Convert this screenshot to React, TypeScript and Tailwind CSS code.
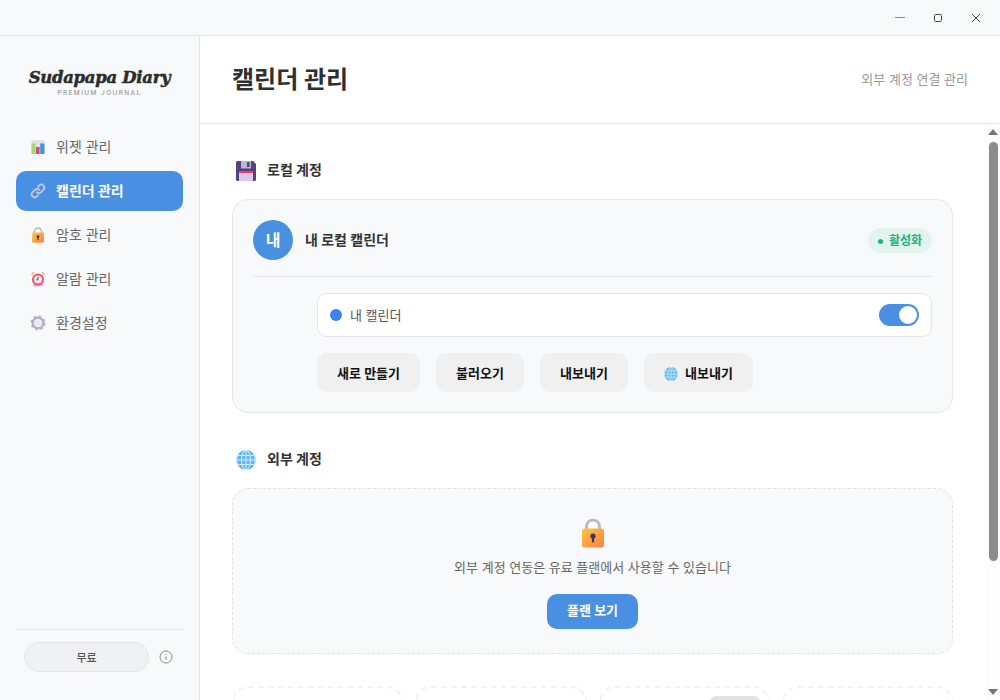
import React from 'react';

const FONT = 'font-["Inter","Noto_Sans_CJK_KR",sans-serif]';

const ChartIcon = ({ className = 'w-4 h-4' }: { className?: string }) => (
  <svg viewBox="0 0 16 16" className={className}>
    <rect x="1.500" y="1" width="13" height="14" fill="#e4e0ea" />
    <rect x="1.500" y="4.500" width="4" height="10.500" fill="#a5d86a" />
    <rect x="6" y="8" width="3.600" height="7" fill="#e8407a" />
    <rect x="10.200" y="4.500" width="4.300" height="10.500" fill="#3b97e3" />
  </svg>
);

const LinkIcon = () => (
  <svg viewBox="0 0 16 16" className="w-4 h-4" fill="none" stroke="#c9c6d8" strokeWidth="1.9" strokeLinecap="round">
    <path d="M6.8 9.2a3 3 0 0 0 4.3 0l2.3-2.3a3 3 0 0 0-4.3-4.3L8 3.8" />
    <path d="M9.2 6.8a3 3 0 0 0-4.3 0L2.6 9.1a3 3 0 0 0 4.3 4.3L8 12.2" />
  </svg>
);

const LockIcon = ({ className = 'w-4 h-4' }: { className?: string }) => (
  <svg viewBox="0 0 24 30" className={className}>
    <defs>
      <linearGradient id="lockBody" x1="0" y1="0" x2="1" y2="1">
        <stop offset="0" stopColor="#fcc73f" />
        <stop offset="1" stopColor="#fb7f4a" />
      </linearGradient>
    </defs>
    <path d="M5.5 13V8.5a6.5 6.5 0 0 1 13 0V13" fill="none" stroke="#b9b3c6" strokeWidth="2.6" />
    <rect x="1" y="10.5" width="22" height="19" rx="2.5" fill="url(#lockBody)" />
    <circle cx="12" cy="18" r="2.6" fill="#3d3560" />
    <rect x="10.9" y="18" width="2.2" height="6.5" rx="1" fill="#3d3560" />
  </svg>
);

const AlarmIcon = () => (
  <svg viewBox="0 0 16 16" className="w-4 h-4">
    <path d="M1.5 4.5a2.4 2.4 0 0 1 3.4-3zM14.5 4.5a2.4 2.4 0 0 0-3.4-3z" fill="#f5b335" />
    <rect x="3" y="12.5" width="10" height="3" rx="1" fill="#cbb8e2" />
    <circle cx="8" cy="8.5" r="6" fill="#ee4f73" />
    <circle cx="8" cy="8.5" r="4.1" fill="#f7e6e8" />
    <path d="M8 6v2.8h-1.6" stroke="#7a3550" strokeWidth="1" fill="none" />
  </svg>
);

const GearIcon = () => (
  <svg viewBox="0 0 16 16" className="w-4 h-4">
    <circle cx="8" cy="8" r="5.200" fill="none" stroke="#b7adc9" strokeWidth="2.400" />
    <circle cx="8" cy="8" r="6.500" fill="none" stroke="#b7adc9" strokeWidth="2" strokeDasharray="2.550 2.550" />
    <circle cx="8" cy="8" r="3.200" fill="#ece8f0" />
  </svg>
);

const SaveIcon = () => (
  <svg viewBox="0 0 20 20" className="w-5 h-5">
    <path d="M1.5 0h15.5L20 3v15.5a1.5 1.5 0 0 1-1.5 1.5h-17A1.5 1.5 0 0 1 0 18.500v-17A1.500 1.500 0 0 1 1.500 0z" fill="#55417f" />
    <rect x="5" y="0" width="10" height="7.500" fill="#bdb5cc" />
    <rect x="11" y="1" width="2.500" height="5" fill="#55417f" />
    <rect x="3" y="10" width="14" height="10" fill="#dcc8e6" />
    <rect x="3" y="10" width="14" height="2" fill="#ec3f63" />
  </svg>
);

const GlobeIcon = ({ className = 'w-5 h-5' }: { className?: string }) => (
  <svg viewBox="0 0 20 20" className={className}>
    <circle cx="10" cy="10" r="10" fill="#5cb6f4" />
    <g fill="none" stroke="#d3ecfb" strokeWidth="1.100">
      <ellipse cx="10" cy="10" rx="4.500" ry="9.700" />
      <path d="M10 0v20M1 5.500h18M0 10h20M1 14.500h18" />
      <path d="M3 2.500 a14 14 0 0 0 0 15M17 2.500a14 14 0 0 1 0 15" />
    </g>
  </svg>
);

const navItems = [
  { label: '위젯 관리', icon: <ChartIcon /> },
  { label: '캘린더 관리', icon: <LinkIcon />, active: true },
  { label: '암호 관리', icon: <LockIcon /> },
  { label: '알람 관리', icon: <AlarmIcon /> },
  { label: '환경설정', icon: <GearIcon /> },
];

const TitleBar = () => (
  <div className="h-9 shrink-0 flex items-center justify-end bg-[#f8f9fb] border-b border-[#e4e5e8] pr-px">
    <div className="w-[46px] flex justify-center">
      <div className="w-[10px] h-px bg-[#8a8a8a]" />
    </div>
    <div className="w-[30px] flex justify-center">
      <div className="w-2 h-2 border border-[#444] rounded-[1.5px]" />
    </div>
    <div className="w-[46px] flex justify-center">
      <svg viewBox="0 0 10 10" className="w-[10px] h-[10px]" stroke="#444" strokeWidth="1">
        <path d="M1 1l8 8M9 1l-8 8" />
      </svg>
    </div>
  </div>
);

const Sidebar = () => (
  <aside className="w-[200px] shrink-0 flex flex-col bg-[#f8f9fb] border-r border-[#e4e5e8] px-4">
    <div className="h-[96px] pt-[31px] flex flex-col items-center">
      <div className='font-["DejaVu_Serif",serif] italic font-bold text-[16.500px] leading-[22px] tracking-[-0.300px] text-[#2c2c2c] whitespace-nowrap [-webkit-text-stroke:0.500px_#2c2c2c]'>
        Sudapapa Diary
      </div>
      <div className="text-[6.500px] leading-[8px] tracking-[1.400px] text-[#888] whitespace-nowrap">PREMIUM JOURNAL</div>
    </div>
    <nav className="flex flex-col gap-1 mt-[-5px]">
      {navItems.map((item) => (
        <div
          key={item.label}
          className={`h-10 flex items-center gap-[10px] pl-[14px] rounded-[10px] text-sm ${
            item.active ? 'bg-[#4a90e2] text-white font-bold' : 'text-[#666]'
          }`}
        >
          <span className="w-4 h-4 flex items-center justify-center">{item.icon}</span>
          <span>{item.label}</span>
        </div>
      ))}
    </nav>
    <div className="mt-auto h-[71px] border-t border-[#e4e5e8] flex items-start pt-3 pl-2">
      <div className="w-[125px] h-[30px] pt-[2px] rounded-full bg-[#f0f1f3] border border-[#e4e5e8] flex items-center justify-center text-[11px] font-medium text-[#555]">
        무료
      </div>
      <svg viewBox="0 0 14 14" className="w-[14px] h-[14px] ml-[10px] mt-2" fill="none" stroke="#888" strokeWidth="1">
        <circle cx="7" cy="7" r="6" />
        <path d="M7 6.300v3.500M7 4v1" />
      </svg>
    </div>
  </aside>
);

const SectionTitle = ({ icon, title }: { icon: React.ReactNode; title: string }) => (
  <div className="flex items-center gap-[11px] pl-[3px] h-[22px]">
    <span className="w-[21px] flex justify-center">{icon}</span>
    <h2 className="pb-[2px] text-sm font-bold text-[#333]">{title}</h2>
  </div>
);

const ActionButton = ({ width, children }: { width: string; children: React.ReactNode }) => (
  <button className={`${width} h-[39px] pt-[2px] rounded-[10px] bg-[#f0f0f0] text-[13px] font-semibold text-[#111] flex items-center justify-center gap-[7px]`}>
    {children}
  </button>
);

const Scrollbar = () => (
  <div className="w-[14px] shrink-0 bg-[#fdfdfd] flex flex-col items-center">
    <svg viewBox="0 0 10 6" className="w-[10px] h-[6px] mt-[5px] mb-[7px]" fill="#777">
      <path d="M5 0l5 6H0z" />
    </svg>
    <div className="w-[9px] h-[419px] rounded-full bg-[#8c8c8c]" />
    <svg viewBox="0 0 10 6" className="w-[10px] h-[6px] mt-auto mb-[5px]" fill="#777">
      <path d="M5 6L0 0h10z" />
    </svg>
  </div>
);

export default function App() {
  return (
    <div className={`w-[1000px] h-[700px] flex flex-col overflow-hidden bg-white ${FONT}`}>
      <TitleBar />
      <div className="flex-1 flex min-h-0">
        <Sidebar />
        <main className="flex-1 flex flex-col min-w-0">
          <header className="h-[88px] shrink-0 flex items-center justify-between pl-8 pr-8 border-b border-[#e4e5e8]">
            <h1 className="text-2xl font-bold text-[#2f2f2f]">캘린더 관리</h1>
            <span className="text-[13px] text-[#999]">외부 계정 연결 관리</span>
          </header>
          <div className="flex-1 flex min-h-0">
            <div className="flex-1 min-w-0 overflow-hidden pl-8 pr-[33px] pt-9">
              <SectionTitle icon={<SaveIcon />} title="로컬 계정" />
              <section className="mt-[17px] h-[214px] rounded-2xl bg-[#f8f9fb] border border-[#e4e5e8] px-5 pt-5">
                <div className="flex items-center justify-between h-10">
                  <div className="flex items-center gap-3">
                    <div className="w-10 h-10 rounded-full bg-[#4a90e2] text-white font-bold text-base flex items-center justify-center">내</div>
                    <span className="text-sm font-bold text-[#333]">내 로컬 캘린더</span>
                  </div>
                  <div className="h-[25px] pt-[2px] px-[10px] rounded-full bg-[#e3f4ee] text-xs font-semibold text-[#22b07d] flex items-center gap-[6px]">
                    <span className="w-[5px] h-[5px] rounded-full bg-[#10b981]" />
                    활성화
                  </div>
                </div>
                <div className="h-px bg-[#e4e5e8] mt-4" />
                <div className="ml-16 mt-4">
                  <div className="h-[44px] rounded-[10px] bg-white border border-[#e4e5e8] flex items-center justify-between pl-3 pr-3">
                    <div className="flex items-center gap-2">
                      <span className="w-3 h-3 rounded-full bg-[#3b82f6]" />
                      <span className="pt-px text-[13px] text-[#555]">내 캘린더</span>
                    </div>
                    <div className="w-10 h-[22px] rounded-full bg-[#4a90e2] flex items-center justify-end pr-[2px]">
                      <div className="w-[18px] h-[18px] rounded-full bg-white" />
                    </div>
                  </div>
                  <div className="flex gap-4 mt-4">
                    <ActionButton width="w-[103px]">새로 만들기</ActionButton>
                    <ActionButton width="w-[88px]">불러오기</ActionButton>
                    <ActionButton width="w-[88px]">내보내기</ActionButton>
                    <ActionButton width="w-[109px]">
                      <GlobeIcon className="w-[14px] h-[14px]" />
                      내보내기
                    </ActionButton>
                  </div>
                </div>
              </section>
              <div className="mt-9">
                <SectionTitle icon={<GlobeIcon />} title="외부 계정" />
              </div>
              <section className="mt-[17px] h-[166px] rounded-2xl bg-[#f8f9fb] border border-dashed border-[#e0e2e6] flex flex-col items-center pt-[29px]">
                <LockIcon className="w-6 h-[30px]" />
                <p className="mt-[10px] text-[13px] text-[#666]">외부 계정 연동은 유료 플랜에서 사용할 수 있습니다</p>
                <button className="mt-4 w-[91px] h-[35px] rounded-[10px] bg-[#4a90e2] text-white text-[13px] font-semibold">플랜 보기</button>
              </section>
              <div className="mt-8 grid grid-cols-4 gap-3">
                {[0, 1, 2, 3].map((i) => (
                  <div key={i} className="relative h-[100px] rounded-2xl border-2 border-dashed border-[#f1f2f4]">
                    {i === 2 && <span className="absolute top-2 right-2 w-[50px] h-5 rounded-md bg-[#e2e2e2]" />}
                  </div>
                ))}
              </div>
            </div>
            <Scrollbar />
          </div>
        </main>
      </div>
    </div>
  );
}
